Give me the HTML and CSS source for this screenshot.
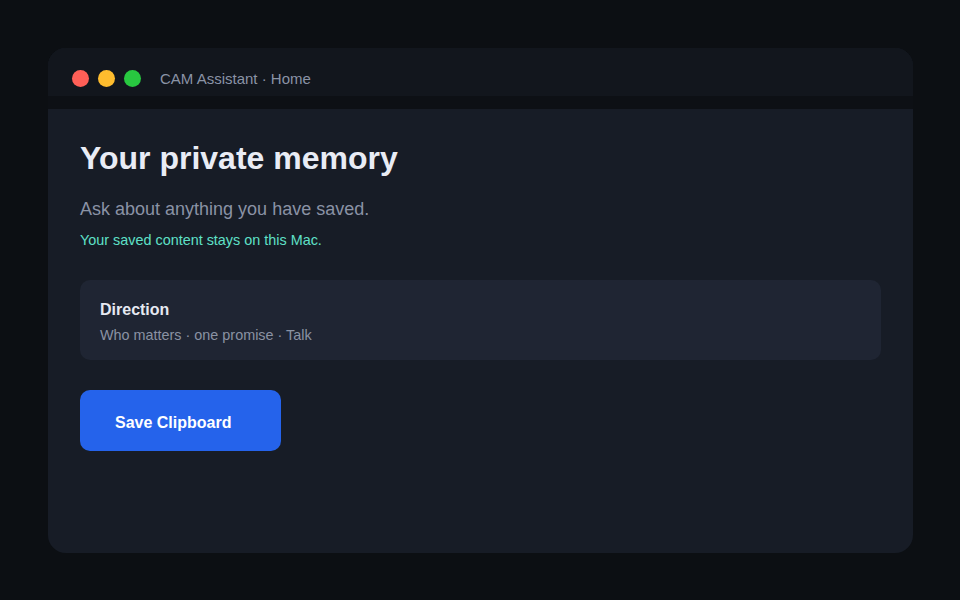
FILE: index.html
```html
<!DOCTYPE html>
<html lang="en">
<head>
  <meta charset="UTF-8">
  <title>CAM Assistant · Home</title>
  <link rel="stylesheet" href="styles.css">
</head>
<body>
  <div class="window">
    <!-- Title bar -->
    <div class="titlebar">
      <span class="dot red"></span>
      <span class="dot yellow"></span>
      <span class="dot green"></span>
      <span class="title">CAM Assistant · Home</span>
    </div>
    <div class="divider"></div>

    <!-- Home -->
    <div class="content">
      <h1>Your private memory</h1>
      <p class="lead">Ask about anything you have saved.</p>
      <p class="privacy">Your saved content stays on this Mac.</p>

      <div class="card">
        <div class="card-title">Direction</div>
        <div class="card-sub">Who matters · one promise · Talk</div>
      </div>

      <button class="primary-btn">Save Clipboard</button>
    </div>
  </div>
</body>
</html>
```

FILE: styles.css
```css
body {
  font-family: "Liberation Sans", Arial, sans-serif;
  background: #0c0f13;
  margin: 0;
  padding: 48px;
  min-height: 100vh;
  box-sizing: border-box;
}
.window {
  width: 865px;
  height: 505px;
  background: #171c26;
  border-radius: 18px;
  overflow: hidden;
  display: flex;
  flex-direction: column;
}
.titlebar {
  background: #12161d;
  height: 48px;
  box-sizing: border-box;
  padding: 22px 24px 10px;
  display: flex;
  align-items: center;
}
.dot {
  width: 17px;
  height: 17px;
  border-radius: 50%;
  margin-right: 9px;
}
.dot.red { background: #ff5f57; }
.dot.yellow { background: #febc2e; }
.dot.green { background: #28c840; }
.title {
  margin-left: 10px;
  color: #8a93a6;
  font-size: 15px;
}
.divider {
  height: 13px;
  background: #0d1015;
}
.content {
  flex: 1;
  padding: 31px 32px 0;
}
h1 {
  margin: 0;
  font-size: 32px;
  font-weight: bold;
  color: #e9ecf5;
}
.lead {
  margin: 22px 0 0;
  font-size: 18px;
  color: #8a92a5;
}
.privacy {
  margin: 12px 0 0;
  font-size: 14.4px;
  color: #5fe0c8;
}
.card {
  margin-top: 32px;
  background: #1f2533;
  border-radius: 10px;
  padding: 21px 20px 17px;
}
.card-title {
  font-size: 16px;
  font-weight: bold;
  color: #e6e9f1;
}
.card-sub {
  margin-top: 8px;
  font-size: 14.4px;
  color: #8a92a3;
}
.primary-btn {
  margin-top: 30px;
  width: 201px;
  height: 61px;
  padding: 4px 0 0 35px;
  text-align: left;
  border: none;
  border-radius: 10px;
  background: #2563eb;
  color: #fff;
  font-family: inherit;
  font-size: 16px;
  font-weight: bold;
  cursor: pointer;
}
```
